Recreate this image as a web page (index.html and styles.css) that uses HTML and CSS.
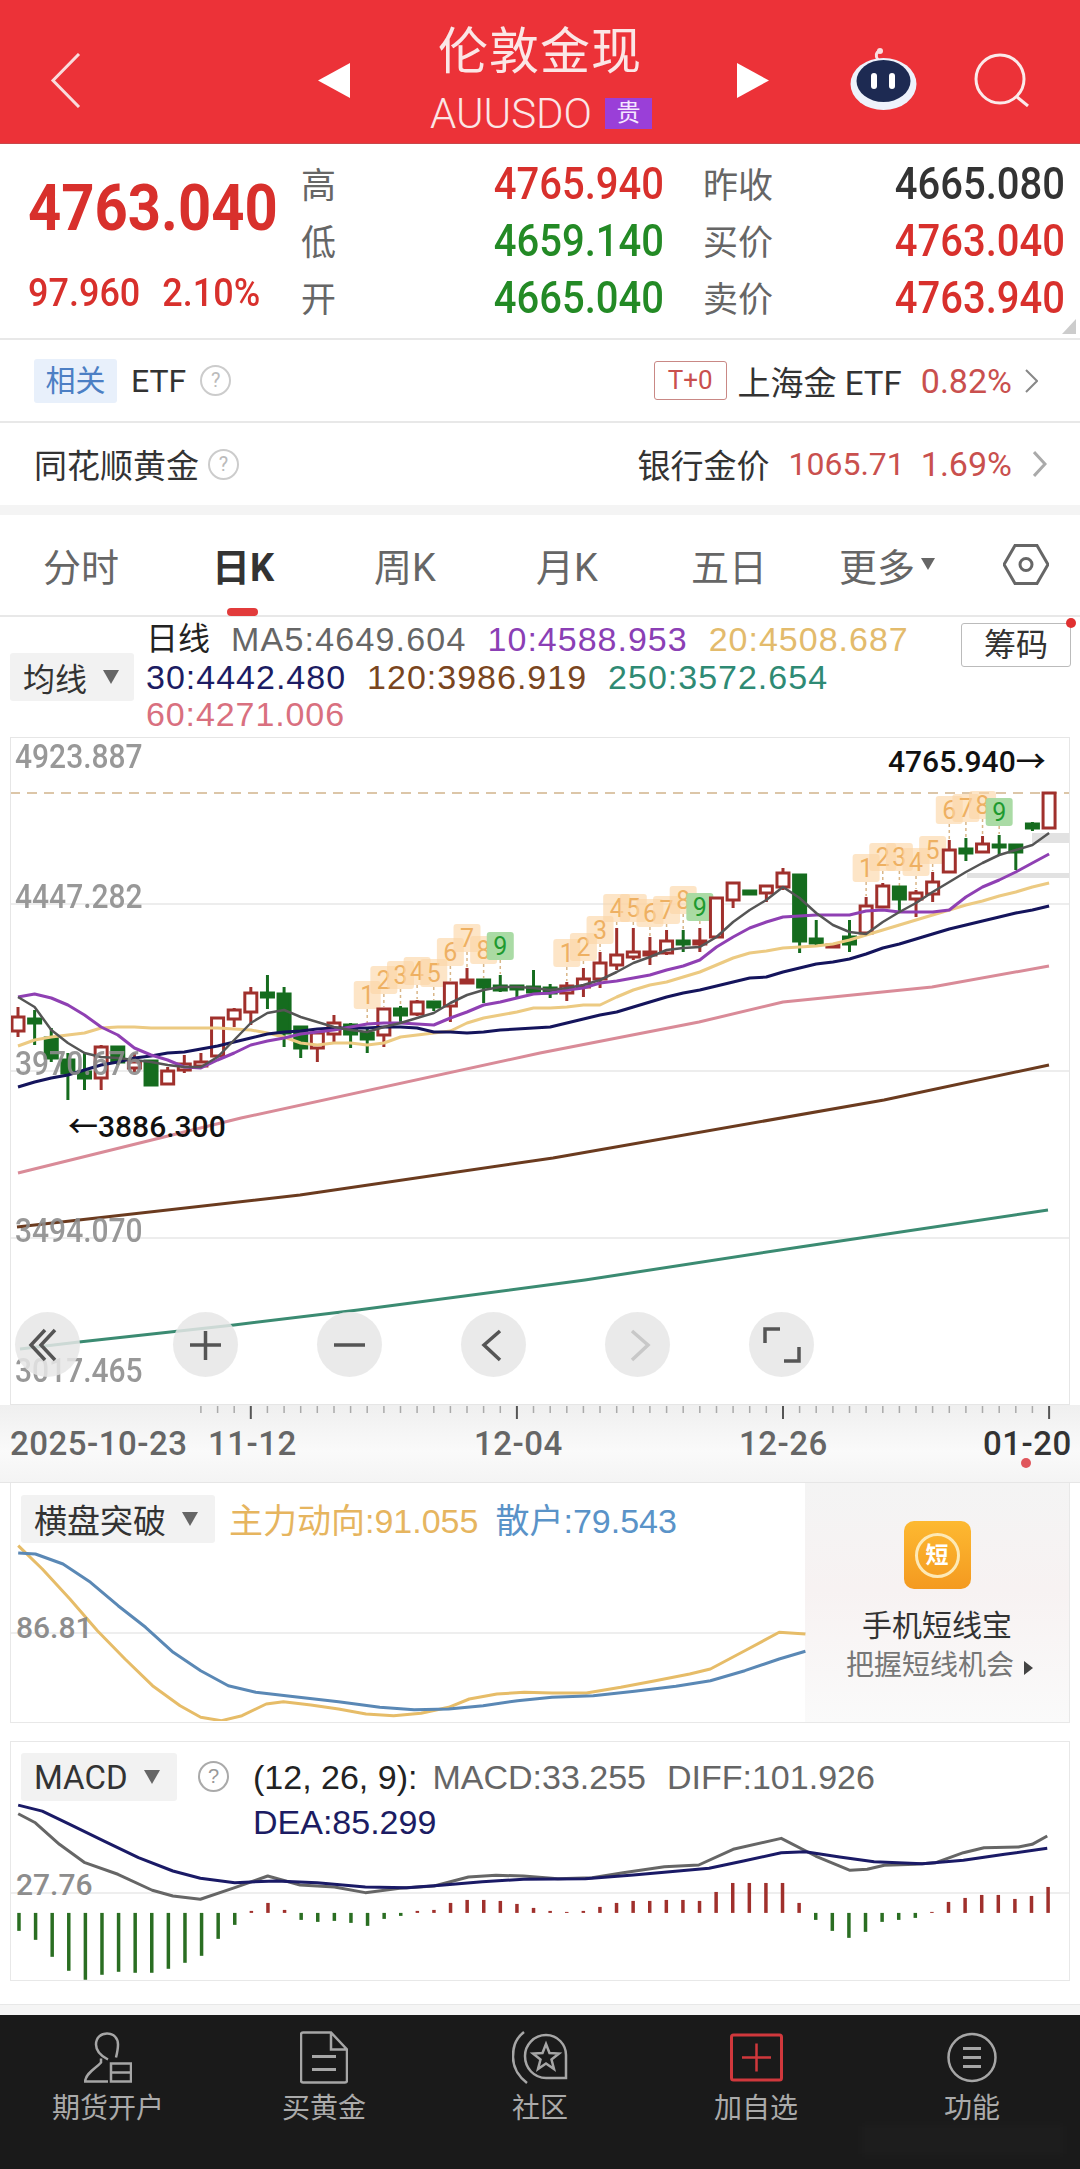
FILE: index.html
```html
<!doctype html>
<html>
<head>
	<meta charset="utf-8">
	<meta name="viewport" content="width=device-width,initial-scale=1.0">
	<link rel="stylesheet" href="styles.css">
</head>

<body>

	<div class="hd">
		<svg class="hd-back" width="31" height="55" viewBox="0 0 31 55"><path d="M29 1 L3 27.500 L29 54"/></svg>
		<svg class="hd-prev" width="32" height="35" viewBox="0 0 32 35"><path d="M32 0 V35 L0 17.500 Z"/></svg>
		<div class="hd-title">
			<div class="hd-name">伦敦金现</div>
			<div class="hd-code">AUUSDO<span class="hd-badge">贵</span></div>
		</div>
		<svg class="hd-next" width="32" height="35" viewBox="0 0 32 35"><path d="M0 0 V35 L32 17.500 Z"/></svg>
		<svg class="hd-robot" width="67" height="62" viewBox="0 0 67 62">
			<path d="M28 12 C25 8 26 4 30 3" fill="none" stroke="#f8dfe0" stroke-width="3"/>
			<circle cx="30" cy="3" r="3" fill="#f8dfe0"/>
			<ellipse cx="33.500" cy="36" rx="33" ry="26" fill="#eef2fb"/>
			<ellipse cx="33.500" cy="33" rx="27" ry="21" fill="#1d2a52"/>
			<rect x="21" y="25" width="6" height="16" rx="3" fill="#fff"/>
			<rect x="39" y="25" width="6" height="16" rx="3" fill="#fff"/>
		</svg>
		<svg class="hd-search" width="56" height="54" viewBox="0 0 56 54"><circle cx="26" cy="26" r="24"/><path d="M43 44 L54 53"/></svg>
	</div>

	<div class="quote">
		<div class="quote-main">
			<div class="quote-last red">4763.040</div>
			<div class="quote-chg red"><span>97.960</span><span>2.10%</span></div>
		</div>
		<div class="quote-table">
			<span class="q-k">高</span><span class="q-v red">4765.940</span><span class="q-k">昨收</span><span class="q-v dark">4665.080</span>
			<span class="q-k">低</span><span class="q-v green">4659.140</span><span class="q-k">买价</span><span class="q-v red">4763.040</span>
			<span class="q-k">开</span><span class="q-v green">4665.040</span><span class="q-k">卖价</span><span class="q-v red">4763.940</span>
		</div>
	</div>

	<div class="link-row etf">
		<div class="link-left">
			<span class="tag-blue">相关</span>
			<span>ETF</span>
			<span class="help">?</span>
		</div>
		<div class="link-right">
			<span class="tag-red">T+0</span>
			<span>上海金 ETF</span>
			<span class="soft-red pct">0.82%</span>
			<svg class="chev" width="13" height="24" viewBox="0 0 13 24"><path d="M1 1 L12 12 L1 23"/></svg>
		</div>
	</div>

	<div class="link-row gold">
		<div class="link-left">
			<span>同花顺黄金</span>
			<span class="help">?</span>
		</div>
		<div class="link-right">
			<span>银行金价</span>
			<span class="soft-red">1065.71</span>
			<span class="soft-red pct">1.69%</span>
			<svg class="chev chev-wide" width="14" height="26" viewBox="0 0 14 26"><path d="M1 1 L12 13 L1 25"/></svg>
		</div>
	</div>

	<div class="band"></div>

	<div class="tabs">
		<div class="tab">分时</div>
		<div class="tab on">日K</div>
		<div class="tab">周K</div>
		<div class="tab">月K</div>
		<div class="tab">五日</div>
		<div class="tab more">更多<i class="arrow"></i></div>
		<div class="tab">
			<svg width="46" height="41" viewBox="0 0 46 41"><path d="M12 1.500 H34 L45 20.500 L34 39.500 H12 L1 20.500 Z"/><circle cx="23" cy="20.500" r="6"/></svg>
		</div>
	</div>

	<div class="ma-info">
		<div class="select ma-select">均线<i class="arrow"></i></div>
		<div class="ma-lines">
			<div class="ma-line"><span class="ma-day">日线</span><span class="c-ma5">MA5:4649.604</span><span class="c-ma10">10:4588.953</span><span class="c-ma20">20:4508.687</span></div>
			<div class="ma-line"><span class="c-ma30">30:4442.480</span><span class="c-ma120">120:3986.919</span><span class="c-ma250">250:3572.654</span></div>
			<div class="ma-line"><span class="c-ma60">60:4271.006</span></div>
		</div>
		<div class="chip-btn">筹码</div>
	</div>

	<div class="kchart">
		<svg id="k" viewBox="10 737 1060 668" width="1060" height="668">
			<g class="grid">
				<path d="M10 904 H1070 M10 1071 H1070 M10 1238 H1070"/>
			</g>
			<path class="high-line" d="M10 793 H1070"/>
			<rect class="chip-bar" x="1032" y="833" width="38" height="10"/>
			<rect class="chip-bar" x="967" y="873" width="103" height="5"/>
			<g id="k-tags"></g>
			<g id="k-candles"></g>
			<g id="k-lines"></g>
			<text class="axis-y" x="15" y="769">4923.887</text>
			<text class="axis-y" x="15" y="909">4447.282</text>
			<text class="axis-y" x="15" y="1076">3970.676</text>
			<text class="axis-y" x="15" y="1243">3494.070</text>
			<text class="axis-y" x="15" y="1383">3017.465</text>
			<text class="mark" x="888" y="772">4765.940→</text>
			<text class="mark" x="68" y="1137">←3886.300</text>
		</svg>
		<div class="zoom-bar">
			<svg class="zoom-btn first" viewBox="0 0 65 65"><path d="M30 18 L16 33 L30 48 M40 18 L26 33 L40 48"/></svg>
			<svg class="zoom-btn" viewBox="0 0 65 65"><path d="M17 33 H48 M32.500 19 V48"/></svg>
			<svg class="zoom-btn" viewBox="0 0 65 65"><path d="M17 33 H48"/></svg>
			<svg class="zoom-btn" viewBox="0 0 65 65"><path d="M39 19 L23 33 L39 48"/></svg>
			<svg class="zoom-btn off" viewBox="0 0 65 65"><path d="M27 19 L43 33 L27 48"/></svg>
			<svg class="zoom-btn" viewBox="0 0 65 65"><path d="M31 17 H16 V31 M35 49 H50 V35"/></svg>
		</div>
	</div>

	<div class="date-axis">
		<svg id="ticks" viewBox="0 0 1080 78" width="1080" height="78">
			<text x="10" y="50">2025-10-23</text>
			<text x="208" y="50">11-12</text>
			<text x="474" y="50">12-04</text>
			<text x="739" y="50">12-26</text>
			<text class="now" x="983" y="50">01-20</text>
			<circle cx="1026" cy="58" r="5"/>
		</svg>
	</div>

	<div class="panel trend">
		<div class="panel-plot">
			<svg id="trend" viewBox="10 1484 795 238" width="795" height="238">
				<path class="grid-line" d="M10 1634 H805"/>
			</svg>
			<div class="panel-head">
				<div class="select">横盘突破<i class="arrow"></i></div>
				<span class="c-main">主力动向:91.055</span>
				<span class="c-retail">散户:79.543</span>
			</div>
			<span class="panel-y">86.81</span>
		</div>
		<div class="ad">
			<div class="ad-icon"><span>短</span></div>
			<div class="ad-title">手机短线宝</div>
			<div class="ad-sub">把握短线机会<i class="ad-arrow"></i></div>
		</div>
	</div>

	<div class="panel macd">
		<svg id="macd" viewBox="10 1741 1060 238" width="1058" height="238">
			<path class="grid-line" d="M10 1892 H1070"/>
		</svg>
		<div class="panel-head">
			<div class="select">MACD<i class="arrow"></i></div>
			<span class="help">?</span>
			<div class="macd-vals">
				<div><span class="c-black">(12, 26, 9):</span><span class="c-gray">MACD:33.255</span><span class="c-gray">DIFF:101.926</span></div>
				<div class="c-navy">DEA:85.299</div>
			</div>
		</div>
		<span class="panel-y macd-y">27.76</span>
	</div>

	<div class="foot-band"></div>

	<div class="nav">
		<div class="nav-item">
			<svg width="48" height="50" viewBox="0 0 48 50"><path d="M24 27 C16 23 12 18 12 12 C12 5 17 1 23 1 C30 1 34 6 34 12 C34 17 33 21 32 25 M17 26 V30 C12 36 2 40 1 49 H24"/><path d="M27 31 H47 V49 H27 Z M27 40 H47"/></svg>
			<span>期货开户</span>
		</div>
		<div class="nav-item">
			<svg width="48" height="52" viewBox="0 0 48 52"><path d="M1 3 Q1 1 3 1 H31 L47 18 V49 Q47 51 45 51 H3 Q1 51 1 49 Z M31 1 V18 H47"/><path class="thick" d="M12 25 H36 M12 38 H36"/></svg>
			<span>买黄金</span>
		</div>
		<div class="nav-item">
			<svg width="56" height="53" viewBox="0 0 56 53"><path d="M12 1 C2 9 1 18 1 26 C1 36 6 45 15 52"/><path d="M34 4 C46 4 54 14 54 24 V47 H34 C22 47 13 37 13 25 C13 14 22 4 34 4 Z"/><path d="M34 13 L37.500 22 L47 22.500 L39.500 28.500 L42 38 L34 32.500 L26 38 L28.500 28.500 L21 22.500 L30.500 22 Z"/></svg>
			<span>社区</span>
		</div>
		<div class="nav-item nav-add">
			<svg width="53" height="48" viewBox="0 0 53 48"><rect x="1.500" y="1.500" width="50" height="45" rx="2"/><path d="M12 24 H41 M26.500 10 V38"/></svg>
			<span>加自选</span>
		</div>
		<div class="nav-item">
			<svg width="50" height="50" viewBox="0 0 50 50"><circle cx="25" cy="25" r="23.500"/><path class="thick" d="M16 16 H34 M16 25 H34 M16 34 H34"/></svg>
			<span>功能</span>
		</div>
	</div>

<script src="chart.js"></script>
</body>
</html>
```

FILE: styles.css
```css
* { box-sizing: border-box; }
html, body { margin: 0;padding: 0; }
body { width: 1080px;height: 2169px;overflow: hidden;background: #fff;color: #333;font-family: Roboto, "Noto Sans CJK SC", sans-serif; }
svg { display: block; }
i { font-style: normal; }

.red { color: #d8302c; }
.green { color: #238a25; }
.dark { color: #333; }
.soft-red { color: #c9504e; }

.arrow { display: inline-block;width: 0;height: 0;margin-left: 16px;border-left: 8px solid transparent;border-right: 8px solid transparent;border-top: 14px solid #666;vertical-align: middle; }

/* header */
.hd { display: flex;align-items: center;height: 144px;padding: 17px 0 0 50px;background: #ec3238;border-bottom: 1px solid #c9474a; }
.hd-back path { fill: none;stroke: #f9dcdc;stroke-width: 3; }
.hd-prev { margin-left: 237px; }
.hd-prev path, .hd-next path { fill: #fff; }
.hd-title { width: 387px;margin-top: -3px;padding-right: 7px;text-align: center;color: #fbe6e6; }
.hd-name { font-size: 50px;line-height: 60px;letter-spacing: 1px; }
.hd-code { display: flex;justify-content: center;align-items: center;font-size: 42px;line-height: 44px;margin-top: 10px;padding-left: 2px;font-weight: 300; }
.hd-badge { width: 47px;height: 31px;margin-left: 13px;background: #9a3fd8;color: #f5e7ff;font-size: 24px;font-weight: 400;line-height: 31px; }
.hd-robot { margin-left: 81px;margin-top: -2px; }
.hd-search { margin-left: 57px; }
.hd-search circle, .hd-search path { fill: none;stroke: #fbeaea;stroke-width: 3; }

/* quote */
.quote { position: relative;display: flex;height: 196px;padding: 11px 0 0 28px;border-bottom: 2px solid #e8e8e8; }
.quote:after { content: "";position: absolute;right: 4px;bottom: 4px;width: 14px;height: 15px;background: #ccc;clip-path: polygon(100% 0, 100% 100%, 0 100%); }
.quote-main { width: 273px; }
.quote-last { margin-top: 23px;font-size: 58px;line-height: 60px;font-weight: 700;transform: scaleY(1.12);transform-origin: left center; }
.quote-chg { display: flex;gap: 22px;margin-top: 35px;font-size: 36px;line-height: 40px;font-weight: 500;transform: scaleY(1.1); }
.quote-table { display: grid;grid-template-columns: 50px 313px 39px 80px 282px;grid-auto-rows: 57px;align-items: center; }
.q-k { margin-top: -3px;font-size: 35px;color: #666;white-space: nowrap; }
.q-k:nth-child(4n+3) { grid-column: 4; }
.q-v { font-size: 40px;font-weight: 500;text-align: right;transform: scaleY(1.12); }

/* link rows */
.link-row { display: flex;justify-content: space-between;align-items: center;padding: 0 33px 0 34px;font-size: 33px;border-bottom: 2px solid #e8e8e8; }
.etf { height: 83px;padding-right: 42px; }
.gold { height: 82px;border-bottom: 0; }
.link-left, .link-right { display: flex;align-items: center; }
.etf .link-left { gap: 14px;font-size: 32px; }
.gold .link-left { gap: 9px; }
.tag-blue { width: 83px;height: 44px;background: #e8f0fb;border-radius: 3px;color: #4c7fc4;font-size: 30px;line-height: 44px;text-align: center; }
.tag-red { width: 73px;height: 39px;margin-right: 11px;border: 1px solid #c98885;border-radius: 3px;color: #c9504e;font-size: 26px;line-height: 37px;text-align: center; }
.help { display: inline-block;width: 31px;height: 31px;border: 2px solid #ccc;border-radius: 50%;color: #bbb;font-size: 20px;line-height: 27px;text-align: center; }
.soft-red { margin-left: 19px;font-size: 32px; }
.soft-red.pct { font-size: 34px; }
.gold .soft-red.pct { margin-left: 16px; }
.chev { margin-left: 13px; }
.chev path { fill: none;stroke: #888;stroke-width: 2; }
.chev-wide { margin-left: 21px; }
.chev-wide path { stroke: #aaa;stroke-width: 3; }
.band { height: 10px;background: #f4f4f4; }

/* period tabs */
.tabs { display: grid;grid-template-columns: repeat(6, 162px) 108px;height: 102px;border-bottom: 2px solid #e8e8e8; }
.tab { position: relative;display: flex;justify-content: center;align-items: center;padding-bottom: 2px;font-size: 38px;color: #666; }
.tab .arrow { margin-left: 6px;border-left-width: 7px;border-right-width: 7px;border-top-width: 12px; }
.tab.more { padding-right: 8px; }
.tab.on { color: #333;font-weight: 700; }
.tab.on:after { content: "";position: absolute;left: 65px;bottom: -1px;width: 31px;height: 8px;background: #e23b3b;border-radius: 4px; }
.tab svg path, .tab svg circle { fill: none;stroke: #666;stroke-width: 3; }

/* moving averages */
.ma-info { position: relative;display: flex;height: 120px; }
.select { display: flex;align-items: center;height: 48px;padding-left: 13px;background: #f2f2f2;border-radius: 3px;font-size: 32px;color: #333; }
.ma-select { width: 124px;margin: 36px 0 0 10px; }
.ma-lines { flex: 1;margin: 4px 0 0 12px; }
.ma-line { display: flex;gap: 21px;font-size: 34px;line-height: 37.500px;letter-spacing: 1px;font-family: "Liberation Sans", "Noto Sans CJK SC", sans-serif; }
.ma-day { color: #222;letter-spacing: 0;font-size: 32px; }
.c-ma5 { color: #666;letter-spacing: 1.200px; }
.c-ma10 { color: #8b3fb5; }
.c-ma20 { color: #e3bb6c; }
.c-ma30 { color: #1c1c63; }
.c-ma120 { color: #7a4520; }
.c-ma250 { color: #2f8a74; }
.c-ma60 { color: #d9707f;letter-spacing: .9px; }
.chip-btn { position: relative;width: 110px;height: 44px;margin: 6px 9px 0 0;border: 1px solid #bbb;border-radius: 3px;font-size: 32px;line-height: 42px;text-align: center; }
.chip-btn:after { content: "";position: absolute;right: -6px;top: -6px;width: 10px;height: 10px;background: #e03030;border-radius: 50%; }

/* candle chart */
.kchart { position: relative;width: 1060px;height: 668px;margin-left: 10px;border: 1px solid #e6e6e6;overflow: hidden; }
.kchart svg#k { position: absolute;left: -1px;top: -1px; }
.grid path, .grid-line { fill: none;stroke: #e8e8e8;stroke-width: 1.500; }
.high-line { fill: none;stroke: #dcc6a8;stroke-width: 2;stroke-dasharray: 10 7; }
.chip-bar { fill: #e2e2e2; }
.axis-y { font-size: 30px;font-weight: 500;fill: #8d8d8d;opacity: .9;transform-box: fill-box;transform-origin: center bottom;transform: scaleY(1.08); }
.mark { font-size: 30px;font-weight: 500;fill: #111; }
.tag-box { fill: #fbd5a4;opacity: .62; }
.tag-box.nine { fill: #a5d9a0;opacity: .95; }
.tag-num { font-size: 25px;fill: #eeb062;text-anchor: middle; }
.tag-num.nine { fill: #1f9a30; }
.tag-stem { stroke: #d9b688;stroke-width: 1.500;stroke-dasharray: 3 3; }
.zoom-bar { position: absolute;left: 4px;top: 574px;display: flex;gap: 79px; }
.zoom-btn { width: 65px;height: 65px;background: rgba(230, 230, 230, .85);border-radius: 50%; }
.zoom-btn.first { margin-right: 14px; }
.zoom-btn path { fill: none;stroke: #555;stroke-width: 3.500; }
.zoom-btn.off path { stroke: #c8c8c8; }

/* date axis */
.date-axis { height: 78px;background: linear-gradient(#efefef, #fafafa 60%, #f4f4f4);border-bottom: 1px solid #e6e6e6; }
.date-axis text { font-size: 33px;font-weight: 500;fill: #666;letter-spacing: .5px; }
.date-axis text.now { fill: #333; }
.date-axis circle { fill: #e0565c; }
.date-axis path { stroke: #aaa;stroke-width: 1.500; }
.date-axis path.major { stroke: #555;stroke-width: 2; }

/* indicator panels */
.panel { position: relative;width: 1060px;height: 240px;margin-left: 10px;border: 1px solid #e8e8e8; }
.trend { display: flex;border-top: 0; }
.macd { margin-top: 18px; }
.panel-plot { position: relative;width: 794px; }
.panel-plot svg, .macd svg { position: absolute;left: 0;top: 0; }
.panel-plot svg polyline, .macd svg polyline { fill: none;stroke-width: 3;stroke-linejoin: round; }
.panel-head { position: relative;display: flex;gap: 14px;align-items: center;padding: 11px 0 0 10px;font-size: 34px;font-family: "Liberation Sans", "Noto Sans CJK SC", sans-serif; }
.panel-head .select { width: 194px;gap: 0;font-size: 33px;font-family: Roboto, "Noto Sans CJK SC", sans-serif; }
.macd .panel-head { align-items: flex-start; }
.macd .panel-head .select { width: 156px; }
.macd .panel-head .help { margin: 8px 0 0 7px;border-color: #aaa;color: #999; }
.macd-vals { margin: 2px 0 0 10px;line-height: 45px; }
.macd-vals span { margin-right: 21px; }
.macd-vals .c-black { margin-right: 15px; }
.c-main { color: #e6b55f; }
.c-retail { color: #5a93c8;margin-left: 3px; }
.c-black { color: #222; }
.c-gray { color: #666; }
.c-navy { color: #1c1c63; }
.panel-y { position: absolute;left: 5px;top: 127px;font-size: 30px;font-weight: 500;color: #8d8d8d; }
.macd-y { top: 125px; }
.ad { flex: 1;display: flex;flex-direction: column;align-items: center;padding-top: 38px;background: linear-gradient(#f4f4f4, #f7f2f2 45%, #fafafa); }
.ad-icon { display: flex;justify-content: center;align-items: center;width: 67px;height: 68px;background: linear-gradient(#fdb931, #f49a20);border-radius: 10px; }
.ad-icon span { width: 45px;height: 45px;border: 3px solid #fde9b6;border-radius: 50%;color: #fff;font-size: 23px;font-weight: 700;line-height: 39px;text-align: center; }
.ad-title { margin-top: 16px;font-size: 30px;line-height: 42px;color: #333; }
.ad-sub { margin: 1px 0 0 5px;font-size: 28px;line-height: 36px;color: #777;white-space: nowrap; }
.ad-arrow { display: inline-block;margin-left: 10px;border-top: 7px solid transparent;border-bottom: 7px solid transparent;border-left: 9px solid #444; }

/* bottom nav */
.foot-band { height: 34px;border-bottom: 10px solid #f5f5f5;box-shadow: inset 0 -1px 0 #e8e8e8; }
.nav { position: relative;display: grid;grid-template-columns: repeat(5, 216px);height: 154px;padding-top: 16px;background: #1a1a1a;color: #aaa;font-size: 28px; }
.nav:after { content: "";position: absolute;left: 860px;top: 108px;width: 205px;height: 34px;background: rgba(255, 255, 255, .015);filter: blur(5px); }
.nav-item { display: flex;flex-direction: column;align-items: center; }
.nav-item svg { height: 53px;margin-bottom: 2px; }
.nav-item path, .nav-item circle { fill: none;stroke: #a6a6a6;stroke-width: 2.500; }
.nav-item path.thick { stroke-width: 3; }
.nav-add rect { fill: none;stroke: #d0383c;stroke-width: 3; }
.nav-add path { stroke: #d0383c; }
```

FILE: chart.js
```js
var SVG_NS = "http://www.w3.org/2000/svg";
var RED = "#a0302c", GREEN = "#156c1e";

function stepX(i) { return 18 + 16.63 * i; }

function add(parent, name, attrs, text) {
	var el = document.createElementNS(SVG_NS, name);
	for (var k in attrs) el.setAttribute(k, attrs[k]);
	if (text !== undefined) el.textContent = text;
	parent.appendChild(el);
	return el;
}

function line(parent, points, color, width) {
	add(parent, "polyline", { points: points.join(" "), fill: "none", stroke: color, "stroke-width": width, "stroke-linejoin": "round" });
}

// one y per candle
function series(ys) {
	return ys.map(function(y, i) { return stepX(i).toFixed(1) + "," + y; });
}

// x,y pairs flat, y measured in thirds from y0
function traced(flat, y0) {
	var out = [];
	for (var i = 0; i < flat.length; i += 2) {
		out.push((flat[i] / 1.452).toFixed(1) + "," + (y0 + flat[i + 1] / 3).toFixed(1));
	}
	return out;
}

// up?, wick top, body top, body bottom, wick bottom
var candles = [
	[1,1007,1017,1031,1037],[0,1010,1019,1023,1045],[0,1028,1038,1058,1062],[0,1053,1060,1073,1100],[0,1053,1072,1078,1090],
	[1,1045,1047,1078,1090],[0,1047,1047,1062,1065],[1,1053,1062,1068,1072],[0,1060,1061,1085,1085],[1,1067,1071,1084,1085],
	[1,1055,1064,1070,1073],[1,1053,1062,1066,1068],[1,1018,1018,1056,1057],[1,1008,1010,1019,1027],[1,987,993,1012,1025],
	[0,975,993,997,1009],[0,987,994,1033,1047],[0,1026,1027,1048,1058],[1,1032,1033,1048,1062],[1,1015,1023,1034,1042],
	[0,1023,1025,1034,1048],[0,1027,1033,1039,1053],[1,1008,1009,1035,1047],[0,1006,1009,1015,1023],[1,1000,1002,1014,1016],
	[0,1001,1002,1007,1011],[1,982,983,1006,1022],[1,968,980,983,984],[0,979,980,987,1003],[0,975,986,990,992],
	[0,985,986,989,999],[0,970,987,992,992],[0,984,988,993,998],[1,982,986,993,1001],[1,968,979,987,997],
	[1,952,963,979,988],[1,928,955,965,970],[1,928,952,957,960],[1,937,952,955,965],[1,930,941,953,955],
	[0,930,941,944,952],[1,928,941,944,952],[1,898,898,937,937],[1,883,883,900,908],[0,891,891,894,894],
	[1,885,886,893,902],[1,868,873,887,890],[0,875,875,941,953],[0,920,939,943,947],[1,945,945,947,947],
	[0,920,937,944,952],[1,897,906,933,933],[1,883,886,907,908],[0,887,887,899,912],[1,890,893,899,917],
	[1,872,882,894,902],[1,840,850,872,873],[0,838,849,853,861],[1,836,844,852,852],[0,835,845,847,855],
	[0,844,845,852,870],[0,822,824,828,831],[1,793,793,828,828]
];

var ma5 = [997,1007,1030,1043,1053,1057,1058,1060,1062,1065,1067,1067,1057,1040,1023,1013,1010,1017,1022,1027,1030,1032,1027,1023,1018,1013,1003,995,990,987,987,988,
	990,988,985,980,972,963,957,950,948,947,937,922,910,900,887,898,913,925,932,934,922,912,903,892,882,872,863,855,850,845,833];
var ma10 = [997,994,998,1005,1015,1027,1035,1048,1055,1060,1067,1068,1060,1053,1045,1041,1038,1034,1032,1030,1027,1024,1023,1023,1024,1025,1018,1012,1005,1002,998,994,
	993,990,988,983,981,978,975,970,966,960,947,937,928,922,917,916,915,915,915,911,910,912,912,912,910,897,887,880,872,863,854];
var ma20 = [1046,1040,1037,1035,1033,1028,1027,1027,1028,1028,1028,1028,1028,1029,1030,1033,1037,1043,1045,1043,1043,1045,1043,1037,1035,1033,1031,1023,1018,1015,1012,1008,
	1008,1007,1005,1005,997,990,985,982,977,972,965,958,953,951,948,947,946,944,940,935,930,925,920,915,910,905,901,896,892,887,883];
var ma30 = [1087,1082,1078,1075,1070,1065,1062,1058,1056,1053,1052,1049,1046,1042,1038,1034,1032,1031,1029,1028,1028,1028,1027,1027,1028,1032,1032,1033,1032,1030,1029,1028,
	1027,1023,1019,1015,1012,1007,1002,997,993,990,986,982,978,977,972,968,964,962,959,954,948,944,939,934,929,925,921,917,913,910,906];

// sequence tags: first candle, then y of each tag 1..9
var tagRuns = [
	[21, [995,980,975,971,973,952,938,950,946]],
	[33, [953,947,930,908,908,913,910,900,907]],
	[51, [868,857,857,862,850,810,808,805,812]]
];

function drawTags() {
	var g = document.getElementById("k-tags");
	tagRuns.forEach(function(run) {
		run[1].forEach(function(y, n) {
			var i = run[0] + n, x = stepX(i), nine = n === 8 ? " nine" : "";
			add(g, "path", { "class": "tag-stem", d: "M" + x + " " + (y + 14) + " V" + (candles[i][1] - 1) });
			add(g, "rect", { "class": "tag-box" + nine, x: x - 13.5, y: y - 14, width: 27, height: 28, rx: 3 });
			add(g, "text", { "class": "tag-num" + nine, x: x, y: y + 9 }, n + 1);
		});
	});
}

function drawCandles() {
	var g = document.getElementById("k-candles");
	candles.forEach(function(c, i) {
		var x = stepX(i), color = c[0] ? RED : GREEN;
		add(g, "path", { d: "M" + x + " " + c[1] + " V" + c[4], stroke: color, "stroke-width": 3 });
		add(g, "rect", {
			x: x - 6, y: c[2], width: 12, height: Math.max(c[3] - c[2], 2),
			fill: c[0] ? "#fff" : GREEN, stroke: color, "stroke-width": 3
		});
	});
}

function drawAverages() {
	var g = document.getElementById("k-lines");
	line(g, ["18,1173", "241,1118", "540,1053", "699,1022", "783,1002", "932,987", "1049,966"], "#d98b98", 3);
	line(g, ["17,1227", "300,1195", "553,1158", "884,1100", "1049,1065"], "#6b3b1f", 3);
	line(g, ["20,1349", "79,1342", "234,1325", "358,1310", "585,1280", "800,1247", "1048,1210"], "#3b8b72", 3);
	line(g, series(ma20), "#ecca82", 3);
	line(g, series(ma30), "#14145c", 3);
	line(g, series(ma10), "#8f40b3", 3);
	line(g, series(ma5), "#555", 2.5);
}

function drawTicks() {
	var svg = document.getElementById("ticks");
	for (var i = 11; i <= 62; i++) {
		var major = (i - 14) % 16 === 0;
		add(svg, "path", { "class": major ? "major" : "", d: "M" + stepX(i).toFixed(1) + " 1 V" + (major ? 14 : 8) });
	}
}

function drawTrend() {
	var svg = document.getElementById("trend");
	line(svg, traced([25,200,60,270,100,360,140,455,180,540,220,620,260,680,290,715,320,725,350,710,385,675,410,668,450,678,490,690,530,705,570,710,610,703,650,685,680,660,720,645,760,640,800,642,850,642,900,625,950,605,1000,585,1030,570,1080,515,1130,460,1168,465], 1480), "#e6bc68", 3);
	line(svg, traced([25,222,50,225,90,255,130,310,170,380,210,445,250,520,290,575,330,620,370,640,420,652,490,668,550,685,600,692,650,690,700,680,750,665,800,655,860,650,920,637,980,622,1030,605,1080,575,1130,540,1168,517], 1480), "#5a88b5", 3);
}

var macdBars = [18,27,44,58,67,62,59,60,60,56,50,43,26,12,-2,-10,-3,7,9,8,10,13,6,3,-2,-3,-10,-13,-13,-12,-9,-5,-2,-1,-2,-6,-10,-12,-12,-13,-13,-12,-21,-30,-30,-30,-30,-10,7,18,25,19,9,7,5,-1,-11,-15,-18,-18,-14,-17,-26];

function drawMacd() {
	var svg = document.getElementById("macd");
	macdBars.forEach(function(h, i) {
		var x = stepX(i);
		add(svg, "path", { d: "M" + x + " 1912 V" + (1912 + h), stroke: h > 0 ? "#2a6e22" : "#a0302c", "stroke-width": 3.5 });
	});
	line(svg, traced([25,248,50,275,85,340,122,395,170,430,220,478,250,495,290,505,340,470,388,435,435,462,485,468,530,485,580,472,630,465,680,438,720,433,760,435,810,443,860,440,905,425,965,407,1015,402,1065,355,1135,322,1185,375,1235,418,1260,415,1285,403,1330,400,1360,395,1400,365,1430,350,1480,348,1500,340,1522,315], 1730), "#666", 3);
	line(svg, traced([25,222,60,240,100,280,150,330,200,380,250,420,290,442,340,455,400,450,460,455,530,468,590,470,640,463,700,452,760,445,850,443,920,432,1030,412,1080,390,1135,365,1170,362,1220,378,1270,392,1340,398,1400,388,1460,370,1522,352], 1730), "#1a1a66", 3);
}

drawTags();
drawCandles();
drawAverages();
drawTicks();
drawTrend();
drawMacd();
```
